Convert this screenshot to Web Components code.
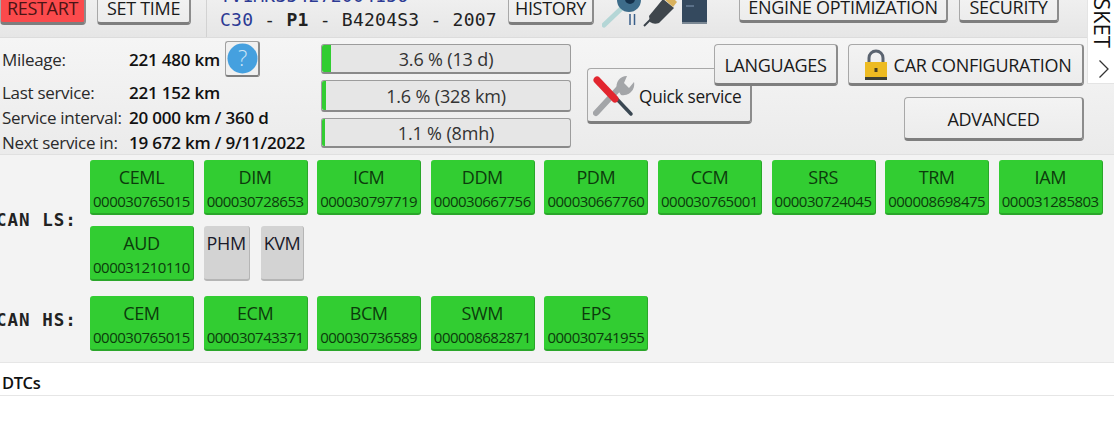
<!DOCTYPE html>
<html>
<head>
<meta charset="utf-8">
<title>Diagnostics</title>
<style>
html, body { margin: 0; padding: 0; background: #fff; overflow: hidden; }
body { width: 1114px; height: 443px; font-family: "Open Sans", "Noto Sans", sans-serif; color: #111; }
</style>
</head>
<body>
<app-shell></app-shell>

<script>
const UI_FONT = '"Open Sans", "Noto Sans", sans-serif';
const MONO_FONT = '"DejaVu Sans Mono", "Liberation Mono", monospace';

class uiButton extends HTMLElement {
    constructor() {
        super();
        this.attachShadow({ mode: "open" });
        this.shadowRoot.innerHTML = `
        <style>
            :host{
                display: flex;
                box-sizing: border-box;
                align-items: center;
                justify-content: center;
                gap: 6px;
                flex: none;
                background: linear-gradient(#f3f3f3, #ececec);
                border: 1px solid #a8a8a8;
                border-bottom: 3px solid #7e7e7e;
                border-right: 2px solid #8c8c8c;
                border-radius: 4px;
                font-size: 18px;
                letter-spacing: -0.3px;
                white-space: nowrap;
                color: #1a1a1a;
            }
            :host([danger]){
                background: #fb4a4c;
                color: #4a1414;
            }
        </style>
        <slot></slot>
        `;
    }
}
customElements.define("ui-button", uiButton);

class moduleCard extends HTMLElement {
    constructor() {
        super();
        this.attachShadow({ mode: "open" });
    }
    connectedCallback() {
        const code = this.getAttribute("code");
        this.shadowRoot.innerHTML = `
        <style>
            :host{
                display: flex;
                flex-direction: column;
                align-items: center;
                box-sizing: border-box;
                height: 55px;
                width: 104px;
                padding-top: 4px;
                background: #32cd32;
                border-radius: 3px;
                border-bottom: 2px solid #2aa62a;
                border-right: 1px solid #2aa62a;
                color: #0c3b0c;
                white-space: nowrap;
            }
            :host([off]){
                width: auto;
                padding: 4px 3px 0;
                margin-right: 1.400px;
                background: #d3d3d3;
                border-color: #b5b5b5;
                color: #1a1a2a;
            }
            .name{ font-size: 18px; line-height: 26px; letter-spacing: -0.4px; }
            .code{ font-size: 15px; line-height: 21px; letter-spacing: -0.5px; margin-top: 1px; }
        </style>
        <div class="name">${this.getAttribute("name")}</div>
        ${code ? `<div class="code">${code}</div>` : ""}
        `;
    }
}
customElements.define("module-card", moduleCard);

class progressBar extends HTMLElement {
    constructor() {
        super();
        this.attachShadow({ mode: "open" });
    }
    connectedCallback() {
        this.shadowRoot.innerHTML = `
        <style>
            :host{
                display: block;
                position: relative;
                box-sizing: border-box;
                width: 250px;
                height: ${this.getAttribute("h") || 30}px;
                background: #e6e6e6;
                border: 1px solid #9c9c9c;
                border-bottom: 2px solid #8a8a8a;
                border-radius: 3px;
                font-size: 18px;
                letter-spacing: -0.15px;
                color: #333;
            }
            .fill{
                position: absolute;
                left: 0;
                top: 0;
                bottom: 0;
                width: ${this.getAttribute("fill")}px;
                background: #32cd32;
                border-radius: 2px 0 0 2px;
            }
            .label{
                display: flex;
                position: relative;
                height: 100%;
                align-items: center;
                justify-content: center;
            }
        </style>
        <div class="fill"></div>
        <div class="label">${this.getAttribute("label")}</div>
        `;
    }
}
customElements.define("progress-bar", progressBar);

class topBar extends HTMLElement {
    constructor() {
        super();
        this.attachShadow({ mode: "open" });
        this.shadowRoot.innerHTML = `
        <style>
            :host{
                display: flex;
                box-sizing: border-box;
                height: 38px;
                align-items: flex-start;
                overflow: hidden;
                background: linear-gradient(#efefef, #e6e6e6);
                border-bottom: 1px solid #dcdcdc;
            }
            .row{ display: flex; align-items: flex-end; height: 25px; }
            ui-button{ height: 32px; }
            .restart{ width: 86px; }
            .settime{ width: 94px; margin-left: 11px; }
            .car{
                box-sizing: border-box;
                width: 302px;
                height: 37px;
                margin-left: 15px;
                padding-left: 13px;
                display: flex;
                flex-direction: column;
                justify-content: flex-end;
                border-left: 1px solid #d2d2d2;
                font-family: ${MONO_FONT};
                font-size: 18px;
                line-height: 24px;
                letter-spacing: 0.24px;
                white-space: pre;
                color: #222;
                padding-bottom: 5px;
            }
            .vin, .model{ color: #2c3a94; }
            .history{ width: 86px; }
            .icons{ display: flex; align-items: flex-start; width: 145px; padding-left: 8px; box-sizing: border-box; height: 37px; }
            .btns{ display: flex; align-items: flex-end; height: 23px; }
            .btns ui-button{ height: 30px; }
            .engine{ width: 209px; }
            .security{ width: 100px; margin-left: 11px; }
        </style>
        <div class="row"><ui-button class="restart" danger>RESTART</ui-button></div>
        <div class="row"><ui-button class="settime">SET TIME</ui-button></div>
        <div class="car"><span class="vin">YV1MK354272004156</span><span><span class="model">C30</span> - <b>P1</b> - B4204S3 - 2007</span></div>
        <div class="row"><ui-button class="history">HISTORY</ui-button></div>
        <div class="icons">
            <svg width="107" height="36" viewBox="0 0 107 36">
                <path d="M2 25 L22 6" stroke="#b4d6d6" stroke-width="5" stroke-linecap="round"/>
                <circle cx="27" cy="0" r="12" fill="#3d6c8a"/>
                <circle cx="28" cy="-1" r="5" fill="#14304a"/>
                <path d="M28 14v11M32.500 14v11" stroke="#3a5f8a" stroke-width="1.500"/>
                <path d="M42 26 L50 18" stroke="#39424a" stroke-width="2"/>
                <path d="M47 16 L61 -1 L72 8 L57 23 Q52 25 48 22 Z" fill="#3f464c"/>
                <path d="M62 -1 L68 -5 L75 2 L71 7 Z" fill="#d9b25e"/>
                <rect x="80" y="-8" width="25" height="32" fill="#34495e"/>
                <rect x="80" y="22" width="25" height="2" fill="#7b8894"/>
                <rect x="84" y="5" width="8" height="2" fill="#5a7088"/>
            </svg>
        </div>
        <div class="btns"><ui-button class="engine">ENGINE OPTIMIZATION</ui-button><ui-button class="security">SECURITY</ui-button></div>
        `;
    }
}
customElements.define("top-bar", topBar);

class infoPanel extends HTMLElement {
    constructor() {
        super();
        this.attachShadow({ mode: "open" });
        this.shadowRoot.innerHTML = `
        <style>
            :host{
                display: flex;
                box-sizing: border-box;
                height: 117px;
                background: linear-gradient(#f5f5f5, #ebebeb);
                border-bottom: 1px solid #e0e0e0;
            }
            .facts{
                box-sizing: border-box;
                width: 321px;
                flex: none;
                padding: 3px 0 0 2px;
                display: grid;
                grid-template-columns: 127px auto;
                grid-template-rows: 36px 30px 20px 30px;
                align-items: center;
                font-size: 17px;
                letter-spacing: -0.3px;
                white-space: nowrap;
                color: #2a2a2a;
            }
            .facts b{ font-weight: 600; letter-spacing: -0.2px; color: #111; display: flex; align-items: center; gap: 5px; }
            .help{
                width: 35px;
                height: 36px;
                box-sizing: border-box;
                display: flex;
                align-items: center;
                justify-content: center;
                background: #f0f0f0;
                border: 1px solid #a0a0a0;
                border-bottom: 2px solid #7e7e7e;
                border-right: 2px solid #8c8c8c;
                border-radius: 3px;
            }
            .bars{
                display: flex;
                flex-direction: column;
                gap: 6px;
                padding-top: 6px;
                width: 266px;
                flex: none;
            }
            .right{ position: relative; flex: 1; }
            .quick{
                width: 165px;
                height: 56px;
                margin-top: 30px;
                padding: 2px 0 0 5px;
                font-size: 17.300px;
                gap: 4px;
                justify-content: flex-start;
                letter-spacing: -0.3px;
            }
            .actions{
                position: absolute;
                left: 127px;
                top: 6px;
                display: grid;
                grid-template-columns: 124px 236px;
                grid-template-rows: 42px 44px;
                column-gap: 10px;
                row-gap: 11px;
            }
            .actions ui-button{ padding-top: 2px; }
            .config{ padding-left: 4px; }
            .advanced{ grid-column: 2; width: 180px; justify-self: end; }
        </style>
        <div class="facts">
            <span>Mileage:</span><b>221 480 km <span class="help">
                <svg width="31" height="31" viewBox="0 0 31 31"><circle cx="15.500" cy="15.500" r="15" fill="#45a0df"/><text x="15.500" y="23" text-anchor="middle" font-size="22" font-weight="300" font-family="Open Sans, sans-serif" fill="#cfe6f6">?</text></svg>
            </span></b>
            <span>Last service:</span><b>221 152 km</b>
            <span>Service interval:</span><b>20 000 km / 360 d</b>
            <span>Next service in:</span><b>19 672 km / 9/11/2022</b>
        </div>
        <div class="bars">
            <progress-bar fill="9" label="3.6 % (13 d)"></progress-bar>
            <progress-bar fill="4" label="1.6 % (328 km)" h="32"></progress-bar>
            <progress-bar fill="3" label="1.1 % (8mh)" h="30"></progress-bar>
        </div>
        <div class="right">
            <ui-button class="quick">
                <svg width="42" height="42" viewBox="0 0 42 42">
                    <path d="M3 38 L28 11" stroke="#a3a5a8" stroke-width="6" stroke-linecap="round"/>
                    <path d="M24 14 A10 10 0 0 1 34 1 L31 8 L36 13 L41 7 A11 11 0 0 1 28 20 Z" fill="#a3a5a8"/>
                    <path d="M21 21 L38 39" stroke="#3a4752" stroke-width="3.500" stroke-linecap="round"/>
                    <path d="M4 5 L22 24" stroke="#e2262f" stroke-width="7" stroke-linecap="round"/>
                </svg>
                Quick service
            </ui-button>
            <div class="actions">
                <ui-button>LANGUAGES</ui-button>
                <ui-button class="config">
                    <svg width="24" height="32" viewBox="0 0 24 32">
                        <path d="M5 14 V9 A7 7 0 0 1 19 9 V14" fill="none" stroke="#5b6470" stroke-width="3"/>
                        <rect x="1" y="13" width="22" height="18" fill="#edbb22"/>
                        <rect x="1" y="28" width="22" height="3" fill="#3c3f35"/>
                        <rect x="10.500" y="19" width="3" height="4" fill="#4a4020"/>
                    </svg>
                    CAR CONFIGURATION
                </ui-button>
                <ui-button class="advanced">ADVANCED</ui-button>
            </div>
        </div>
        `;
    }
}
customElements.define("info-panel", infoPanel);

class busRow extends HTMLElement {
    constructor() {
        super();
        this.attachShadow({ mode: "open" });
    }
    connectedCallback() {
        this.shadowRoot.innerHTML = `
        <style>
            :host{
                display: flex;
                align-items: center;
            }
            .label{
                width: 89px;
                flex: none;
                margin-left: -4px;
                padding-right: 5px;
                padding-bottom: ${this.getAttribute("lift") || 0}px;
                box-sizing: content-box;
                font-family: ${MONO_FONT};
                font-weight: bold;
                font-size: 17.500px;
                letter-spacing: 1px;
                white-space: pre;
                color: #222;
            }
            .mods{
                display: flex;
                flex-wrap: wrap;
                column-gap: 9.6px;
                row-gap: 10.500px;
                width: 1024px;
            }
        </style>
        <div class="label">${this.getAttribute("label")}</div>
        <div class="mods"><slot></slot></div>
        `;
    }
}
customElements.define("bus-row", busRow);

class appShell extends HTMLElement {
    constructor() {
        super();
        this.attachShadow({ mode: "open" });
        this.shadowRoot.innerHTML = `
        <style>
            :host{
                display: block;
                position: relative;
                width: 1114px;
                height: 443px;
                overflow: hidden;
                background: #fff;
                font-family: ${UI_FONT};
            }
            .modules{
                box-sizing: border-box;
                height: 208px;
                padding-top: 5px;
                display: flex;
                flex-direction: column;
                gap: 15px;
                background: #f3f3f3;
                border-bottom: 1px solid #e6e6e6;
            }
            .dtc{
                box-sizing: border-box;
                height: 33px;
                display: flex;
                align-items: center;
                padding: 6px 0 0 2px;
                font-size: 16.500px;
                font-weight: 600;
                letter-spacing: -0.4px;
                color: #111;
                border-bottom: 1px solid #e6e6e6;
            }
            .side{
                position: absolute;
                right: 0;
                top: 0;
                width: 27px;
                height: 84px;
                box-sizing: border-box;
                background: #fff;
                border-left: 1px solid #e4e4e4;
                border-bottom: 1px solid #e4e4e4;
                display: flex;
                flex-direction: column;
                align-items: center;
                justify-content: flex-end;
                overflow: hidden;
            }
            .side span{
                writing-mode: vertical-rl;
                font-size: 22px;
                line-height: 24px;
                color: #111;
                margin: 0 0 11px 3px;
            }
            .side svg{ margin: 0 0 4px 6px; flex: none; }
        </style>
        <top-bar></top-bar>
        <info-panel></info-panel>
        <div class="modules">
            <bus-row label="CAN LS:">
                <module-card name="CEML" code="000030765015"></module-card>
                <module-card name="DIM" code="000030728653"></module-card>
                <module-card name="ICM" code="000030797719"></module-card>
                <module-card name="DDM" code="000030667756"></module-card>
                <module-card name="PDM" code="000030667760"></module-card>
                <module-card name="CCM" code="000030765001"></module-card>
                <module-card name="SRS" code="000030724045"></module-card>
                <module-card name="TRM" code="000008698475"></module-card>
                <module-card name="IAM" code="000031285803"></module-card>
                <module-card name="AUD" code="000031210110"></module-card>
                <module-card name="PHM" off></module-card>
                <module-card name="KVM" off></module-card>
            </bus-row>
            <bus-row label="CAN HS:" lift="7">
                <module-card name="CEM" code="000030765015"></module-card>
                <module-card name="ECM" code="000030743371"></module-card>
                <module-card name="BCM" code="000030736589"></module-card>
                <module-card name="SWM" code="000008682871"></module-card>
                <module-card name="EPS" code="000030741955"></module-card>
            </bus-row>
        </div>
        <div class="dtc">DTCs</div>
        <div class="side">
            <span>SKET</span>
            <svg width="12" height="20" viewBox="0 0 12 20"><path d="M1.500 1.500 L10 10 L1.500 18.500" fill="none" stroke="#333" stroke-width="1.300"/></svg>
        </div>
        `;
    }
}
customElements.define("app-shell", appShell);
</script>
</body>
</html>
